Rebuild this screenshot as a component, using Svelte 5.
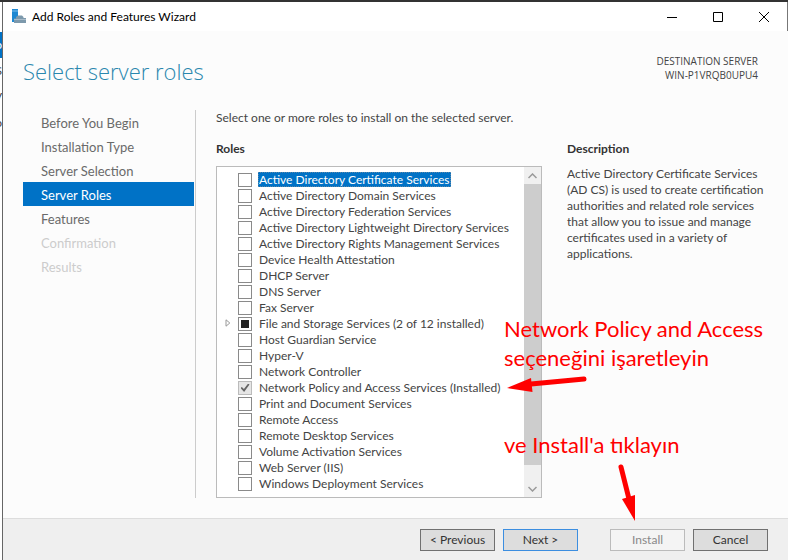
<script lang="ts">
	type Role = { name: string; checked?: boolean; partial?: boolean; installed?: boolean };

	const steps = [
		{ name: 'Before You Begin', state: '' },
		{ name: 'Installation Type', state: '' },
		{ name: 'Server Selection', state: '' },
		{ name: 'Server Roles', state: 'current' },
		{ name: 'Features', state: '' },
		{ name: 'Confirmation', state: 'disabled' },
		{ name: 'Results', state: 'disabled' }
	];

	let roles: Role[] = $state([
		{ name: 'Active Directory Certificate Services' },
		{ name: 'Active Directory Domain Services' },
		{ name: 'Active Directory Federation Services' },
		{ name: 'Active Directory Lightweight Directory Services' },
		{ name: 'Active Directory Rights Management Services' },
		{ name: 'Device Health Attestation' },
		{ name: 'DHCP Server' },
		{ name: 'DNS Server' },
		{ name: 'Fax Server' },
		{ name: 'File and Storage Services (2 of 12 installed)', partial: true },
		{ name: 'Host Guardian Service' },
		{ name: 'Hyper-V' },
		{ name: 'Network Controller' },
		{ name: 'Network Policy and Access Services (Installed)', checked: true, installed: true },
		{ name: 'Print and Document Services' },
		{ name: 'Remote Access' },
		{ name: 'Remote Desktop Services' },
		{ name: 'Volume Activation Services' },
		{ name: 'Web Server (IIS)' },
		{ name: 'Windows Deployment Services' }
	]);

	let selected = $state(0);
</script>

<div class="desktop">
	<div class="behind" aria-hidden="true">
		<span class="active">o</span>
		<span>S</span>
		<span>V</span>
		<span>o</span>
	</div>

	<div class="window">
		<header class="titlebar">
			<svg class="app-icon" width="16" height="16" viewBox="0 0 16 16">
				<path d="M1 0h6v13H1z" fill="#1e88d2" />
				<path d="M1 2h6" stroke="#7fc0ec" />
				<path d="M3 14V9.500h2V8l2-1.500h4L12.500 8v1H15v5z" fill="#7d99ac" />
				<path d="M3 10.500h12" stroke="#a9bcc9" />
			</svg>
			<span class="caption">Add Roles and Features Wizard</span>
			<div class="controls">
				<button aria-label="Minimize">
					<svg width="10" height="10" viewBox="0 0 10 10"><path d="M0 5.500h10" /></svg>
				</button>
				<button aria-label="Maximize">
					<svg width="10" height="10" viewBox="0 0 10 10"><path d="M.5.5h9v9h-9z" /></svg>
				</button>
				<button aria-label="Close">
					<svg width="10" height="10" viewBox="0 0 10 10"><path d="M0 0l10 10M10 0L0 10" /></svg>
				</button>
			</div>
		</header>

		<div class="heading">
			<h1>Select server roles</h1>
			<div class="destination">
				DESTINATION SERVER<br />WIN-P1VRQB0UPU4
			</div>
		</div>

		<div class="content">
			<nav>
				{#each steps as step}
					<button class="step {step.state}" disabled={step.state === 'disabled'}>{step.name}</button>
				{/each}
			</nav>

			<main>
				<p class="intro">Select one or more roles to install on the selected server.</p>
				<div class="panes">
					<section class="roles">
						<h2>Roles</h2>
						<div class="listbox">
							<ul>
								{#each roles as role, i}
									<li>
										<span class="expander">
											{#if role.partial}
												<svg width="6" height="8" viewBox="0 0 6 8"><path d="M1 .8v6.400L4.800 4z" /></svg>
											{/if}
										</span>
										<label class:selected={selected === i}>
											<input
												type="checkbox"
												bind:checked={role.checked}
												indeterminate={role.partial}
												disabled={role.installed}
												onfocus={() => (selected = i)}
											/>
											<span>{role.name}</span>
										</label>
									</li>
								{/each}
							</ul>
							<div class="scrollbar">
								<button aria-label="Scroll up">
									<svg width="9" height="6" viewBox="0 0 9 6"><path d="M.5 5l4-4 4 4" /></svg>
								</button>
								<div class="track"><div class="thumb"></div></div>
								<button aria-label="Scroll down">
									<svg width="9" height="6" viewBox="0 0 9 6"><path d="M.5 1l4 4 4-4" /></svg>
								</button>
							</div>
						</div>
					</section>

					<section class="description">
						<h2>Description</h2>
						<p>
							Active Directory Certificate Services (AD CS) is used to create certification
							authorities and related role services that allow you to issue and manage
							certificates used in a variety of applications.
						</p>
					</section>
				</div>
			</main>
		</div>

		<footer>
			<button>&lt; Previous</button>
			<button class="default">Next &gt;</button>
			<button class="install" disabled>Install</button>
			<button>Cancel</button>
		</footer>
	</div>

	<!-- callouts drawn over the wizard -->
	<p class="note note-role">Network Policy and Access<br />seçeneğini işaretleyin</p>
	<p class="note note-install">ve Install'a tıklayın</p>
	<svg class="arrow arrow-role" width="80" height="20" viewBox="0 0 80 20">
		<path d="M77 6L24 11" />
		<path class="head" d="M0 15L24 5l1.500 14z" />
	</svg>
	<svg class="arrow arrow-install" width="20" height="60" viewBox="0 0 20 60">
		<path d="M5 5l8 32" />
		<path class="head" d="M19 59L6 37l13-4z" />
	</svg>
</div>

<style>
	:global(body) {
		margin: 0;
		background: #fff;
	}

	.desktop {
		position: relative;
		display: flex;
		border-top: 2px solid #333;
		font-family: Lato, 'Open Sans', sans-serif;
		font-size: 12px;
		line-height: 16px;
		color: #444;
		overflow: hidden;
	}

	.behind {
		flex: none;
		width: 2px;
		padding-top: 30px;
		overflow: hidden;
	}

	.behind span {
		display: flex;
		justify-content: flex-end;
		height: 26px;
		align-items: center;
	}

	.behind .active {
		background: #0072c6;
		color: #fff;
	}

	.window {
		flex: 1;
		min-width: 0;
		border-left: 1px solid #666;
		background: #fcfcfc;
	}

	.titlebar {
		display: flex;
		align-items: center;
		height: 29px;
		padding-left: 8px;
		background: #fff;
		color: #000;
		border-right: 1px solid #777;
	}

	.caption {
		flex: 1;
		margin-left: 5px;
	}

	.controls {
		display: flex;
	}

	.controls button {
		display: flex;
		align-items: center;
		justify-content: center;
		width: 46px;
		height: 29px;
		padding: 0;
		border: 0;
		background: none;
	}

	.controls path {
		fill: none;
		stroke: #000;
	}

	.heading {
		display: flex;
		justify-content: space-between;
		height: 79px;
		padding: 23px 30px 0 20px;
		box-sizing: border-box;
	}

	h1 {
		margin: 0;
		font-family: 'Open Sans', 'Noto Sans', sans-serif;
		font-size: 22px;
		line-height: 34px;
		font-weight: 300;
		color: #2a87ae;
	}

	.destination {
		text-align: right;
		font-family: 'Open Sans', 'Noto Sans', sans-serif;
		font-size: 10px;
		line-height: 14px;
	}

	.content {
		display: flex;
		padding: 0 0 20px 20px;
	}

	nav {
		flex: none;
		width: 171px;
		padding-right: 1px;
		border-right: 1px solid #ccc;
	}

	.step {
		display: block;
		width: 100%;
		height: 24px;
		padding: 2px 18px 0;
		border: 0;
		background: none;
		font: inherit;
		font-size: 13px;
		text-align: left;
		color: #6a6a6a;
	}

	.step.current {
		background: #0072c6;
		color: #fff;
	}

	.step.disabled {
		color: #ccc;
	}

	main {
		flex: 1;
		min-width: 0;
		padding-left: 20px;
	}

	.intro {
		margin: 0 0 15px;
	}

	.panes {
		display: flex;
		gap: 25px;
	}

	h2 {
		margin: 0 0 9px;
		font-size: 12px;
		line-height: 16px;
		font-weight: 700;
		color: #333;
	}

	.roles {
		flex: 1;
		min-width: 0;
	}

	.listbox {
		display: flex;
		border: 1px solid #bbb;
		background: #fff;
	}

	ul {
		flex: 1;
		min-width: 0;
		margin: 0;
		padding: 4px 0 6px;
		list-style: none;
	}

	li {
		display: flex;
		height: 16px;
		white-space: nowrap;
	}

	.expander {
		flex: none;
		display: flex;
		align-items: center;
		width: 13px;
		padding-left: 8px;
	}

	.expander path {
		fill: #fff;
		stroke: #999;
	}

	label {
		display: flex;
		align-items: flex-end;
		gap: 6px;
	}

	label.selected span {
		background: #0072c6;
		color: #fff;
		outline: 1px dotted #5a86a8;
		outline-offset: -1px;
	}

	label span {
		height: 15px;
		line-height: 15px;
		padding: 0 1px;
	}

	input {
		appearance: none;
		flex: none;
		display: grid;
		place-content: center;
		width: 14px;
		height: 14px;
		margin: 0;
		border: 1px solid #8a8a8a;
		background: #fff;
	}

	input:indeterminate::before {
		content: '';
		width: 8px;
		height: 8px;
		background: #222;
	}

	input:disabled {
		border-color: #bbb;
		background: #e6e6e6;
	}

	input:checked::before {
		content: '';
		width: 9px;
		height: 9px;
		background: #666;
		clip-path: polygon(0 50%, 15% 38%, 38% 62%, 85% 0, 100% 12%, 40% 95%);
	}

	.scrollbar {
		display: flex;
		flex-direction: column;
		width: 17px;
		background: #f0f0f0;
	}

	.scrollbar button {
		display: flex;
		align-items: center;
		justify-content: center;
		height: 17px;
		padding: 0;
		border: 0;
		background: none;
	}

	.scrollbar path {
		fill: none;
		stroke: #999;
		stroke-width: 1.5;
	}

	.track {
		flex: 1;
	}

	.thumb {
		height: 95%;
		background: #cdcdcd;
	}

	.description {
		flex: none;
		width: 200px;
		padding-right: 21px;
	}

	.description p {
		margin: 0;
	}

	footer {
		display: flex;
		justify-content: flex-end;
		gap: 8px;
		padding: 10px 20px 9px;
		border-top: 1px solid #ddd;
		background: #efefef;
	}

	footer button {
		width: 75px;
		height: 22px;
		padding: 0;
		border: 1px solid #707070;
		background: #ddd;
		font: inherit;
		color: #333;
	}

	footer .default {
		border-color: #3c8ee0;
	}

	footer .install {
		margin-left: 24px;
		border-color: #bbb;
		background: #f4f4f4;
		color: #888;
	}

	.note {
		position: absolute;
		left: 504px;
		margin: 0;
		font-size: 22px;
		line-height: 29px;
		color: #f00;
		white-space: nowrap;
	}

	.note-role {
		top: 312px;
	}

	.note-install {
		top: 428px;
	}

	.arrow {
		position: absolute;
	}

	.arrow path {
		fill: none;
		stroke: #f00;
		stroke-width: 5;
		stroke-linecap: round;
	}

	.arrow .head {
		fill: #f00;
		stroke: none;
	}

	.arrow-role {
		left: 507px;
		top: 371px;
	}

	.arrow-install {
		left: 616px;
		top: 460px;
	}
</style>
